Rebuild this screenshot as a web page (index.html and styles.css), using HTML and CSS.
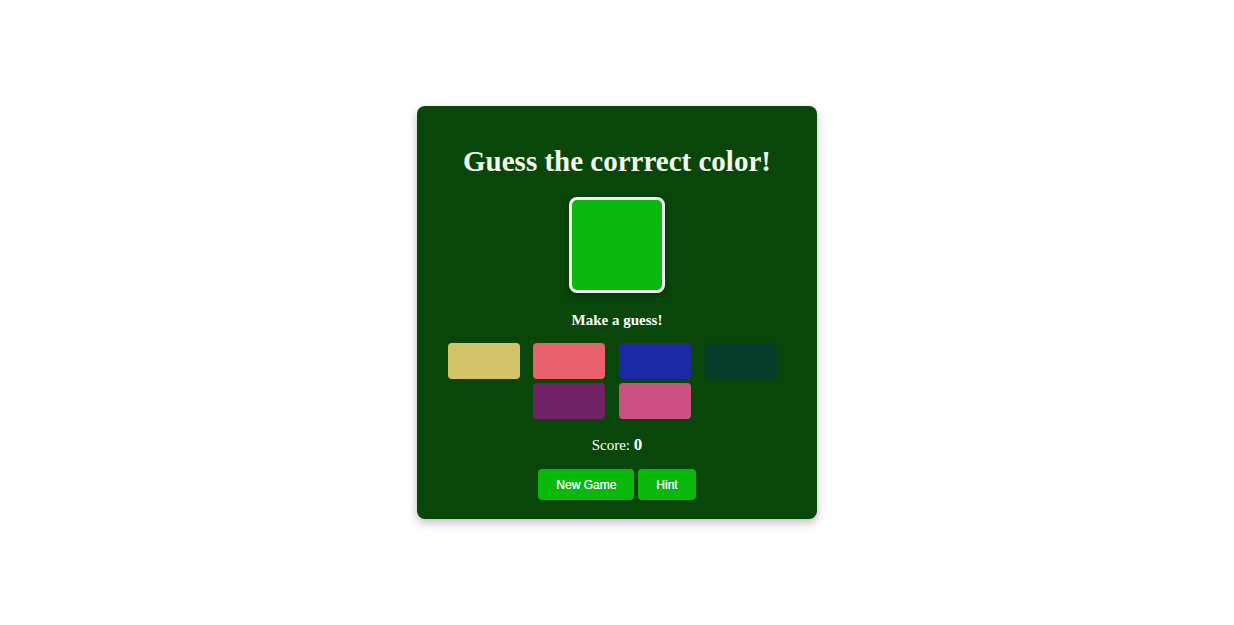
FILE: index.html
```html
<!DOCTYPE html>
<html>
<head>
<meta charset="utf-8">
<link rel="stylesheet" href="styles.css">
</head>
<body>
<div class="card">
  <h1 class="title">Guess the corrrect color!</h1>
  <div class="target"></div>
  <p class="status">Make a guess!</p>
  <div class="options">
    <button class="swatch" style="background:#d4c468"></button>
    <button class="swatch" style="background:#e9606e"></button>
    <button class="swatch" style="background:#1b2aa2"></button>
    <button class="swatch" style="background:#053e2b"></button>
    <button class="swatch" style="background:#712166"></button>
    <button class="swatch" style="background:#cc5081"></button>
  </div>
  <p class="score">Score: <span class="num">0</span></p>
  <div class="actions">
    <button class="btn">New Game</button>
    <button class="btn">Hint</button>
  </div>
</div>
</body>
</html>
```
FILE: styles.css
```css
html, body {
  margin: 0;
  padding: 0;
  background: #ffffff;
}
body {
  height: 100vh;
  display: flex;
  align-items: center;
  justify-content: center;
  font-family: "Liberation Serif", "Times New Roman", serif;
}
.card {
  width: 400px;
  box-sizing: border-box;
  padding: 30px 24px 19px;
  background: #08460a;
  border-radius: 8px;
  box-shadow: 0 4px 10px rgba(0,0,0,0.25);
  color: #ffffff;
  text-align: center;
}
.title {
  margin: 0 0 11px;
  font-size: 29px;
  line-height: 50px;
  font-weight: bold;
  color: #f4f9ee;
}
.target {
  width: 90px;
  height: 90px;
  margin: 0 auto;
  background: #0ab90d;
  border: 3px solid #f4f7f0;
  border-radius: 8px;
  box-shadow: 0 2px 6px rgba(0,0,0,0.3);
}
.status {
  margin: 17px 0 11px;
  font-size: 15px;
  font-weight: bold;
  line-height: 20px;
}
.options {
  width: 342.4px;
  display: flex;
  flex-wrap: wrap;
  justify-content: center;
}
.swatch {
  width: 72px;
  height: 36px;
  margin: 2px 6.8px;
  border: none;
  border-radius: 4px;
  padding: 0;
}
.score {
  margin: 14px 0 14px;
  font-size: 15px;
  line-height: 20px;
}
.num {
  font-weight: bold;
  font-size: 17px;
}
.actions {
  display: flex;
  justify-content: center;
  gap: 4px;
}
.btn {
  height: 31px;
  padding: 0 18px;
  border: none;
  border-radius: 4px;
  background: #09b80b;
  color: #ffffff;
  font-family: "Liberation Sans", Arial, sans-serif;
  font-size: 12px;
  text-shadow: 0 0 0.4px #ffffff;
}
```
